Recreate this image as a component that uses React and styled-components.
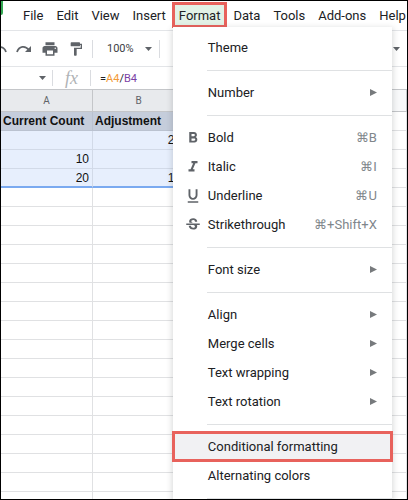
import React from 'react';
import styled, { createGlobalStyle, css } from 'styled-components';
import {
	MdFormatBold,
	MdFormatItalic,
	MdFormatUnderlined,
	MdStrikethroughS,
	MdPrint,
	MdFormatPaint
} from 'react-icons/md';

const GlobalStyle = createGlobalStyle`
	*, *::before, *::after {
		box-sizing: border-box;
	}
	body {
		margin: 0;
		background: #fff;
		font-family: Roboto, 'Liberation Sans', sans-serif;
		font-size: 13px;
		color: #202124;
	}
	button, input {
		font: inherit;
		color: inherit;
		border: 0;
		padding: 0;
		margin: 0;
		background: none;
	}
`;

const highlight = css`
	outline: 3px solid #e8625c;
	outline-offset: -2px;
`;

const Window = styled.div`
	display: flex;
	flex-direction: column;
	height: 100vh;
	border: 1px solid #000;
	overflow: hidden;
`;

const MenuBar = styled.nav`
	display: flex;
	flex: none;
	align-items: flex-start;
	gap: 1px;
	height: 30px;
	border-bottom: 1px solid #e3e5e8;
	padding-top: 2px;
`;

const Logo = styled.svg`
	flex: none;
	width: 3px;
	height: 14px;
	margin: -2px 13px 0 -1px;
`;

const MenuTab = styled.button`
	height: 24px;
	padding: 0 6px;
	white-space: nowrap;
	background: ${props => (props.$open ? '#e2f1e6' : 'transparent')};
	${props => props.$open && highlight}
`;

const MenuAnchor = styled.div`
	position: relative;
	z-index: 1;
`;

const Dropdown = styled.div`
	position: absolute;
	top: 100%;
	left: 0;
	width: 219px;
	padding: 6px 0;
	background: #fff;
	box-shadow: 0 2px 6px 1px rgba(60, 64, 67, .2);
`;

const Item = styled.button`
	display: flex;
	align-items: center;
	width: 100%;
	height: 29px;
	padding: 0 15px 0 11px;
	text-align: left;
	background: ${props => (props.$active ? '#f1f1f3' : 'transparent')};
	${props => props.$active && highlight}
	.icon {
		display: flex;
		width: 24px;
		color: #5f6368;
		font-size: 18px;
	}
	.label {
		flex: 1;
	}
	.keys {
		color: #80868b;
	}
`;

const Separator = styled.hr`
	height: 1px;
	margin: 8px 0 7px 34px;
	border: 0;
	background: #dfe1e3;
`;

const Toolbar = styled.div`
	display: flex;
	flex: none;
	align-items: center;
	height: 36px;
	border-bottom: 1px solid #e3e5e8;
	color: #5f6368;
`;

const Tool = styled.button`
	display: flex;
	flex: none;
	align-items: center;
	justify-content: center;
	width: 26px;
	height: 24px;
`;

const UndoTool = styled(Tool)`
	justify-content: flex-start;
	width: 10px;
	overflow: hidden;
`;

const Zoom = styled.button`
	display: flex;
	align-items: center;
	gap: 11px;
	height: 18px;
	margin-left: 3px;
	padding: 0 7px 0 14px;
	border: solid #dadce0;
	border-width: 0 1px;
	color: #3c4043;
	font-size: 11px;
`;

const MoreTool = styled(Tool)`
	width: 22px;
	margin-left: auto;
`;

const FormulaBar = styled.div`
	display: flex;
	flex: none;
	align-items: center;
	height: 22px;
	color: #5f6368;
	.name {
		display: flex;
		justify-content: flex-end;
		width: 52px;
		height: 16px;
		align-items: center;
		padding-right: 6px;
		border-right: 1px solid #dadce0;
	}
	.fx {
		width: 38px;
		border-right: 1px solid #dadce0;
		color: #b0b3b6;
		font: italic 18px/16px 'Liberation Serif', serif;
		text-align: center;
	}
	.formula {
		padding-left: 9px;
		color: #202124;
		font-size: 11px;
	}
	.a {
		color: #f29a38;
	}
	.b {
		color: #7b3fa5;
	}
`;

const Sheet = styled.table`
	width: 100%;
	table-layout: fixed;
	border-collapse: separate;
	border-spacing: 0;
	font-family: 'Liberation Sans', sans-serif;
	font-size: 12px;
	color: #111;
	th, td {
		height: 19px;
		padding: 0 3px;
		line-height: 16px;
		border: solid #e0e1e3;
		border-width: 0 1px 1px 0;
		white-space: nowrap;
	}
	thead th {
		height: 23px;
		border-top: 1px solid #c4c6c9;
		border-color: #c4c6c9;
		background: #f8f9fa;
		color: #5f6368;
		font: 10px Roboto, sans-serif;
	}
	thead .selected {
		background: #e8eaed;
	}
`;

const Cell = styled.td`
	text-align: ${props => (props.$title ? 'left' : 'right')};
	font-weight: ${props => (props.$title ? 'bold' : 'normal')};
	&& {
		${props => props.$title && 'padding: 0 2px;'}
		${props => props.$selected && `
			background: ${props.$title ? '#c5cddb' : '#e7effd'};
			border-color: ${props.$title ? '#bac2d0' : '#d2dae8'};
		`}
		${props => props.$last && 'border-bottom: 2px solid #7baaf0;'}
	}
`;

const CaretIcon = () => (
	<svg width="7" height="4" viewBox="0 0 7 4" fill="#5f6368">
		<path d="M0 0h7L3.500 4z" />
	</svg>
);

const SubmenuIcon = () => (
	<svg width="7" height="7" viewBox="0 0 7 7" fill="#777a7d">
		<path d="M0 0l7 3.500L0 7z" />
	</svg>
);

const RedoIcon = () => (
	<svg width="16" height="8" viewBox="0 0 16 8">
		<path d="M1 7C3 1 9 0 13 5" fill="none" stroke="#5f6368" strokeWidth="1.800" />
		<path d="M15 1v6H9z" fill="#5f6368" />
	</svg>
);

const UndoIcon = () => (
	<svg width="6" height="8" viewBox="0 0 6 8">
		<path d="M-1 2C2 2 4 4 5 7" fill="none" stroke="#5f6368" strokeWidth="1.800" />
	</svg>
);

const formatItems = [
	{ label: 'Theme' },
	null,
	{ label: 'Number', submenu: true },
	null,
	{ label: 'Bold', icon: <MdFormatBold />, keys: '⌘B' },
	{ label: 'Italic', icon: <MdFormatItalic />, keys: '⌘I' },
	{ label: 'Underline', icon: <MdFormatUnderlined />, keys: '⌘U' },
	{ label: 'Strikethrough', icon: <MdStrikethroughS />, keys: '⌘+Shift+X' },
	null,
	{ label: 'Font size', submenu: true },
	null,
	{ label: 'Align', submenu: true },
	{ label: 'Merge cells', submenu: true },
	{ label: 'Text wrapping', submenu: true },
	{ label: 'Text rotation', submenu: true },
	null,
	{ label: 'Conditional formatting', active: true },
	{ label: 'Alternating colors' },
	null
];

const rows = [
	['Current Count', 'Adjustment'],
	['', '20'],
	['10', ''],
	['20', '10']
];

const emptyRows = Array.from({ length: 17 }, (_, i) => i);

const FormatMenu = () => {
	return (
		<MenuAnchor>
			<MenuTab $open aria-haspopup="menu" aria-expanded="true">Format</MenuTab>
			<Dropdown role="menu">
				{formatItems.map((item, i) => item ? (
					<Item key={i} role="menuitem" $active={item.active}>
						<span className="icon">{item.icon}</span>
						<span className="label">{item.label}</span>
						{item.keys && <span className="keys">{item.keys}</span>}
						{item.submenu && <SubmenuIcon />}
					</Item>
				) : (
					<Separator key={i} />
				))}
			</Dropdown>
		</MenuAnchor>
	);
}

const App = () => {
	return (
		<Window>
			<GlobalStyle />
			<MenuBar>
				<Logo viewBox="0 0 3 14">
					<path d="M0 0h3v12q0 2-2 2H0z" fill="#34a853" />
				</Logo>
				<MenuTab>File</MenuTab>
				<MenuTab>Edit</MenuTab>
				<MenuTab>View</MenuTab>
				<MenuTab>Insert</MenuTab>
				<FormatMenu />
				<MenuTab>Data</MenuTab>
				<MenuTab>Tools</MenuTab>
				<MenuTab>Add-ons</MenuTab>
				<MenuTab>Help</MenuTab>
			</MenuBar>
			<Toolbar>
				<UndoTool aria-label="Undo"><UndoIcon /></UndoTool>
				<Tool aria-label="Redo"><RedoIcon /></Tool>
				<Tool aria-label="Print"><MdPrint size={18} /></Tool>
				<Tool aria-label="Paint format"><MdFormatPaint size={16} /></Tool>
				<Zoom>100% <CaretIcon /></Zoom>
				<MoreTool aria-label="More"><CaretIcon /></MoreTool>
			</Toolbar>
			<FormulaBar>
				<button className="name" aria-label="Name box"><CaretIcon /></button>
				<span className="fx">fx</span>
				<span className="formula">
					=<span className="a">A4</span>/<span className="b">B4</span>
				</span>
			</FormulaBar>
			<Sheet>
				<colgroup>
					<col width="92" />
					<col width="92" />
					<col />
				</colgroup>
				<thead>
					<tr>
						<th className="selected">A</th>
						<th className="selected">B</th>
						<th />
					</tr>
				</thead>
				<tbody>
					{rows.map((row, i) => (
						<tr key={i}>
							{row.map((value, j) => (
								<Cell key={j} $selected $title={i === 0} $last={i === rows.length - 1}>
									{value}
								</Cell>
							))}
							<td />
						</tr>
					))}
					{emptyRows.map(i => (
						<tr key={i}>
							<td />
							<td />
							<td />
						</tr>
					))}
				</tbody>
			</Sheet>
		</Window>
	);
}

export default App;
